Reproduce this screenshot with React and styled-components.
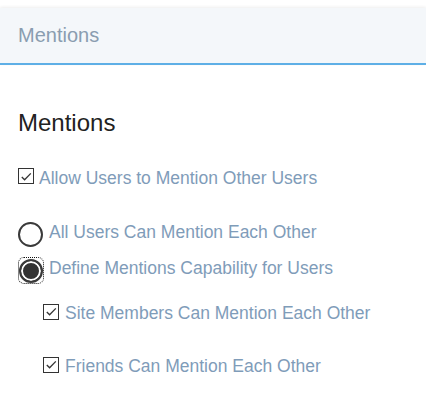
import styled, { createGlobalStyle } from 'styled-components'

const GlobalStyle = createGlobalStyle`
    body {
        margin: 0;
        background: #fff;
        font-family: "Liberation Sans", Arial, sans-serif;
    }
`

const options = [
    { label: 'All Users Can Mention Each Other', checked: false },
    { label: 'Define Mentions Capability for Users', checked: true },
]

const subOptions = [
    { label: 'Site Members Can Mention Each Other', gap: 16 },
    { label: 'Friends Can Mention Each Other', gap: 29 },
]

const Check = () => (
    <Box>
        <svg width="13" height="13" viewBox="0 0 13 13">
            <path d="M1.8 7 L4.6 9.8 L10.8 3.4" fill="none" stroke="#333" strokeWidth="1.3" />
        </svg>
    </Box>
)

const App = () => {
    return (
        <>
            <GlobalStyle />
            <Header>Mentions</Header>
            <Body>
                <Heading>Mentions</Heading>
                <Row gap={29}>
                    <Check />
                    <Label>Allow Users to Mention Other Users</Label>
                </Row>
                {options.map((o, i) => (
                    <Row key={o.label} gap={i === 0 ? 33.5 : 10} height={26}>
                        {o.checked ? (
                            <Focus>
                                <Radio checked />
                            </Focus>
                        ) : (
                            <Radio />
                        )}
                        <RadioLabel>{o.label}</RadioLabel>
                    </Row>
                ))}
                <SubList>
                    {subOptions.map((o) => (
                        <Row key={o.label} gap={o.gap}>
                            <Check />
                            <Label sub>{o.label}</Label>
                        </Row>
                    ))}
                </SubList>
            </Body>
        </>
    )
}

const Header = styled.div`
    margin-top: 8px;
    height: 55px;
    display: flex;
    align-items: center;
    padding-left: 18px;
    background: #f4f7fa;
    border-bottom: 2px solid #5eafe6;
    box-shadow: 0 -1px 3px rgba(0, 0, 0, 0.07);
    color: #8a9db0;
    font-size: 20px;
`

const Body = styled.div`
    padding-left: 18px;
`

const Heading = styled.h2`
    margin: 46px 0 0;
    font-size: 24px;
    line-height: 24px;
    font-weight: normal;
    color: #222;
`

const Row = styled.div`
    display: flex;
    align-items: center;
    height: ${(p) => p.height || 24}px;
    margin-top: ${(p) => p.gap}px;
`

const Box = styled.span`
    box-sizing: border-box;
    width: 16px;
    height: 16px;
    border: 1.5px solid #333;
    display: flex;
    align-items: center;
    justify-content: center;
    flex-shrink: 0;
`

const Label = styled.span`
    margin-left: ${(p) => (p.sub ? 6 : 5)}px;
    padding-top: 4px;
    font-size: 17.5px;
    color: #7f9cb9;
`

const RadioLabel = styled(Label)`
    margin-left: 6px;
    padding-top: 0;
    margin-bottom: 5px;
`

const Focus = styled.span`
    box-sizing: border-box;
    width: 26px;
    height: 27px;
    border: 1px dotted #111;
    border-radius: 6px;
    display: flex;
    align-items: center;
    justify-content: center;
    margin-right: -1px;
`

const Radio = styled.span`
    box-sizing: border-box;
    width: ${(p) => (p.checked ? 24 : 25)}px;
    height: ${(p) => (p.checked ? 24 : 25)}px;
    border-radius: 50%;
    border: 2px solid #3a3a3a;
    background: ${(p) => (p.checked ? '#333' : '#fff')};
    box-shadow: ${(p) => (p.checked ? 'inset 0 0 0 2px #fff' : 'none')};
    flex-shrink: 0;
`

const SubList = styled.div`
    padding-left: 25px;
`

export default App
